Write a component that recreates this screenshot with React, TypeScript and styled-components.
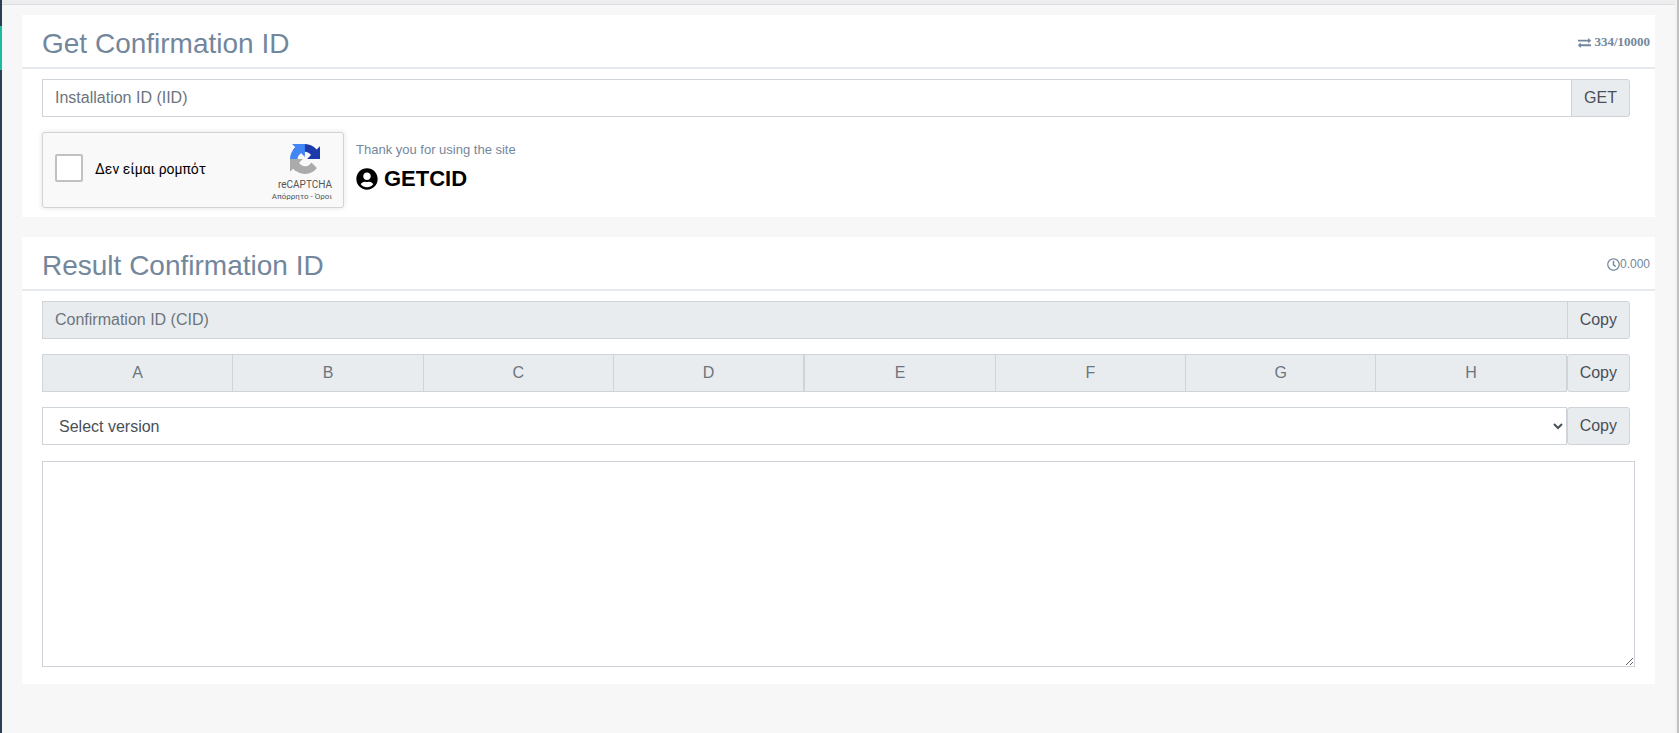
import React from "react";
import styled, { createGlobalStyle, css } from "styled-components";
import { FaUserCircle, FaRegClock } from "react-icons/fa";

const GlobalStyle = createGlobalStyle`
  * { box-sizing: border-box; }
  body {
    margin: 0;
    background: #f7f7f7;
    color: #73879c;
    font-family: "Liberation Sans", Arial, sans-serif;
    font-size: 13px;
    line-height: 20px;
  }
`;

const Shell = styled.div`
  display: flex;
  min-height: 100vh;
`;

const SideEdge = styled.div`
  width: 2px;
  background: #2a3f54;
  padding-top: 26px;
`;

const ActiveMark = styled.div`
  height: 44px;
  background: #1abb9c;
`;

const ScrollEdge = styled.div`
  width: 4px;
  background: #c1c1c1;
  border-left: 2px solid #f1f1f1;
`;

const Page = styled.div`
  flex: 1;
  min-width: 0;
`;

const TopBar = styled.header`
  height: 5px;
  background: #ededed;
  border-bottom: 1px solid #d9dee4;
`;

const Main = styled.main`
  display: flex;
  flex-direction: column;
  gap: 20px;
  padding: 10px 20px 20px;
`;

const Panel = styled.section`
  background: #fff;
`;

const PanelHeader = styled.div`
  display: flex;
  justify-content: space-between;
  height: 54px;
  padding: 10px 5px 0 20px;
  border-bottom: 2px solid #e6e9ed;
`;

const Title = styled.h2`
  margin: 0;
  font-size: 28px;
  font-weight: 400;
  line-height: 38px;
`;

const Counter = styled.span<{ $bold?: boolean }>`
  display: flex;
  align-items: center;
  gap: ${(p) => (p.$bold ? 3 : 0)}px;
  height: 34px;
  font-family: ${(p) => (p.$bold ? '"Liberation Serif", "Times New Roman", serif' : "inherit")};
  font-size: ${(p) => (p.$bold ? 13 : 12)}px;
  font-weight: ${(p) => (p.$bold ? 700 : 400)};
`;

const PanelBody = styled.div<{ $tall?: boolean }>`
  display: flex;
  flex-direction: column;
  gap: 15px;
  padding: 10px 20px ${(p) => (p.$tall ? 17 : 9)}px;
`;

const InputGroup = styled.div`
  display: flex;
  height: 38px;
  padding-right: 5px;
`;

const field = css`
  min-width: 0;
  height: 38px;
  margin: 0;
  padding: 6px 12px;
  border: 1px solid #ced4da;
  border-radius: 0;
  background: #fff;
  color: #495057;
  font-family: inherit;
  font-size: 16px;
  line-height: 24px;
`;

const TextInput = styled.input<{ $center?: boolean }>`
  ${field}
  flex: 1;
  text-align: ${(p) => (p.$center ? "center" : "left")};
  &::placeholder { color: #6c757d; opacity: 1; }
  &:read-only { background: #e9ecef; }
  & + & { border-left: 0; }
`;

const VersionSelect = styled.select`
  ${field}
  flex: 1;
`;

const AddonButton = styled.button<{ $joined?: boolean }>`
  ${field}
  flex: none;
  background: #e9ecef;
  border-radius: ${(p) => (p.$joined ? "0 3px 3px 0" : "3px")};
  margin-left: ${(p) => (p.$joined ? -1 : 0)}px;
  cursor: pointer;
`;

const CellGroup = styled.div`
  display: flex;
  flex: 1;
  min-width: 0;
`;

const Output = styled.textarea`
  ${field}
  display: block;
  width: 100%;
  height: 206px;
  margin-top: 1px;
  resize: both;
`;

const CaptchaRow = styled.div`
  display: flex;
  gap: 12px;
`;

const Captcha = styled.div`
  display: flex;
  justify-content: space-between;
  width: 302px;
  height: 76px;
  padding: 0 11px 0 12px;
  border: 1px solid #d3d3d3;
  border-radius: 3px;
  background: #f9f9f9;
  box-shadow: 0 0 4px 1px rgba(0, 0, 0, 0.08);
  font-family: Roboto, sans-serif;
`;

const CaptchaLabel = styled.label`
  display: flex;
  align-items: center;
  gap: 12px;
  height: 70px;
  color: #000;
  font-size: 14px;
  line-height: 20px;
`;

const CaptchaText = styled.span`
  padding-top: 2px;
`;

const CaptchaBox = styled.input`
  appearance: none;
  width: 28px;
  height: 28px;
  margin: 0;
  border: 2px solid #c1c1c1;
  border-radius: 2px;
  background: #fff;
`;

const CaptchaBrand = styled.div`
  display: flex;
  flex-direction: column;
  align-items: flex-end;
  padding-top: 11px;
  color: #555;
  font-size: 10px;
  line-height: 12px;
`;

const CaptchaMark = styled.div`
  display: flex;
  flex-direction: column;
  align-items: center;
  gap: 5px;
`;

const CaptchaLinks = styled.div`
  font-size: 8px;
  a { color: inherit; text-decoration: none; }
`;

const Thanks = styled.div`
  padding-top: 8px;
`;

const SiteName = styled.div`
  display: flex;
  align-items: center;
  gap: 6px;
  margin-top: 4px;
  color: #000;
  font-size: 22px;
  font-weight: 700;
  line-height: 30px;
`;

const ExchangeIcon = () => (
  <svg width="13" height="13" viewBox="0 0 1792 1792" fill="currentColor" aria-hidden="true">
    <path d="M1792 1184v192q0 13-9.500 22.500t-22.500 9.500H384v192q0 13-9.500 22.500t-22.500 9.500q-12 0-24-10L9 1302q-9-9-9-22 0-14 9-23l320-320q9-9 23-9 13 0 22.500 9.500t9.500 22.500v192h1376q13 0 22.500 9.500t9.500 22.500z" />
    <path d="M1792 640q0 14-9 23l-320 320q-9 9-23 9-13 0-22.500-9.500t-9.500-22.500V768H32q-13 0-22.500-9.500T0 736V544q0-13 9.500-22.500T32 512h1376V320q0-14 9-23t23-9q12 0 24 10l319 319q9 9 9 23z" />
  </svg>
);

const RecaptchaLogo = () => (
  <svg width="30" height="30" viewBox="0 0 64 64" aria-hidden="true">
    <path
      fill="#1c3aa9"
      d="M64 32V4.640l-7.200 7.200C50.900 4.600 42 .1 32 .1 21.600.1 12.400 5 6.600 12.600l11.700 11.900a15.600 15.600 0 0 1 4.800-5.300c2-1.600 5-2.900 8.900-2.900 5.400.3 10.100 3 12.800 7.200l-8.300 8.300z"
    />
    <path
      fill="#4285f4"
      d="M32 .1H4.500l7.200 7.200C4.500 13.200 0 22.100 0 32.100c0 10.400 4.900 19.600 12.500 25.400l11.900-11.700a15.600 15.600 0 0 1-5.300-4.800c-1.600-2-2.900-5-2.900-8.900.3-5.400 3-10.100 7.200-12.900l8.300 8.300z"
    />
    <path
      fill="#ababab"
      d="M0 32v27.400l7.200-7.200C13.100 59.400 22 63.900 32 63.900c10.400 0 19.600-4.900 25.400-12.500L45.700 39.500a15.600 15.600 0 0 1-4.800 5.300c-2 1.600-5 2.900-8.900 2.900-5.400-.3-10.100-3-12.900-7.200l8.300-8.300z"
    />
  </svg>
);

const cellGroups = [
  ["A", "B", "C", "D"],
  ["E", "F", "G", "H"],
];

export default function App() {
  return (
    <Shell>
      <GlobalStyle />
      <SideEdge>
        <ActiveMark />
      </SideEdge>
      <Page>
        <TopBar />
        <Main>
          <Panel>
            <PanelHeader>
              <Title>Get Confirmation ID</Title>
              <Counter $bold>
                <ExchangeIcon />
                334/10000
              </Counter>
            </PanelHeader>
            <PanelBody>
              <InputGroup>
                <TextInput aria-label="Installation ID" placeholder="Installation ID (IID)" />
                <AddonButton $joined type="button">GET</AddonButton>
              </InputGroup>
              <CaptchaRow>
                <Captcha>
                  <CaptchaLabel>
                    <CaptchaBox type="checkbox" />
                    <CaptchaText>Δεν είμαι ρομπότ</CaptchaText>
                  </CaptchaLabel>
                  <CaptchaBrand>
                    <CaptchaMark>
                      <RecaptchaLogo />
                      reCAPTCHA
                    </CaptchaMark>
                    <CaptchaLinks>
                      <a href="#privacy">Απόρρητο</a> - <a href="#terms">Όροι</a>
                    </CaptchaLinks>
                  </CaptchaBrand>
                </Captcha>
                <Thanks>
                  Thank you for using the site
                  <SiteName>
                    <FaUserCircle size={22} />
                    GETCID
                  </SiteName>
                </Thanks>
              </CaptchaRow>
            </PanelBody>
          </Panel>
          <Panel>
            <PanelHeader>
              <Title>Result Confirmation ID</Title>
              <Counter>
                <FaRegClock size={13} />
                0.000
              </Counter>
            </PanelHeader>
            <PanelBody $tall>
              <InputGroup>
                <TextInput readOnly aria-label="Confirmation ID" placeholder="Confirmation ID (CID)" />
                <AddonButton $joined type="button">Copy</AddonButton>
              </InputGroup>
              <InputGroup>
                {cellGroups.map((group) => (
                  <CellGroup key={group[0]}>
                    {group.map((c) => (
                      <TextInput key={c} $center readOnly aria-label={`Block ${c}`} placeholder={c} />
                    ))}
                  </CellGroup>
                ))}
                <AddonButton type="button">Copy</AddonButton>
              </InputGroup>
              <InputGroup>
                <VersionSelect aria-label="Version">
                  <option>Select version</option>
                </VersionSelect>
                <AddonButton type="button">Copy</AddonButton>
              </InputGroup>
              <Output aria-label="Result" />
            </PanelBody>
          </Panel>
        </Main>
      </Page>
      <ScrollEdge />
    </Shell>
  );
}
